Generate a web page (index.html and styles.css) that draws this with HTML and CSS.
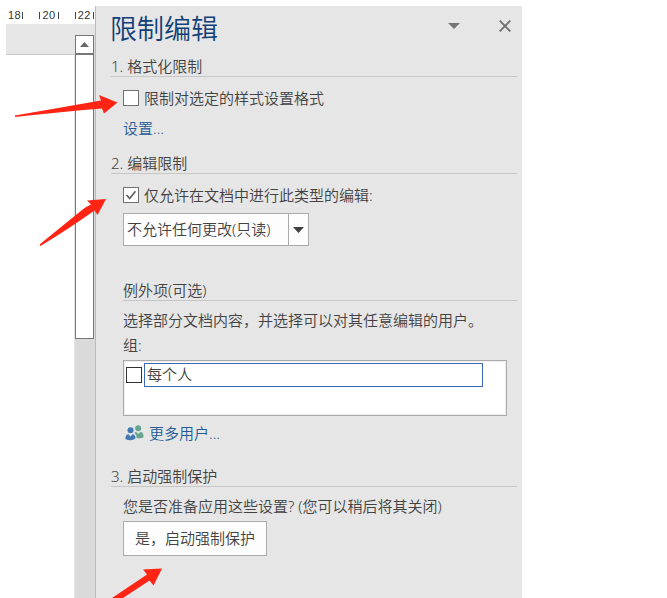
FILE: index.html
```html
<!DOCTYPE html>
<html lang="zh-CN">
<head>
<meta charset="utf-8">
<title>限制编辑</title>
<link rel="stylesheet" href="styles.css">
</head>
<body>
<div class="window">
  <div class="document">
    <div class="ruler"><span>18<i></i></span><span><i></i>20<i></i></span><span><i></i>22<i></i></span></div>
    <div class="workspace">
      <div class="page-column"><div class="page-gap"></div></div>
      <div class="scrollbar">
        <div class="scroll-up"><svg width="9" height="5" viewBox="0 0 9 5"><path d="M0 5L4.5 0L9 5Z" fill="#686868"/></svg></div>
        <div class="thumb"></div>
      </div>
    </div>
  </div>
  <aside class="panel">
    <header class="panel-header">
      <h1>限制编辑</h1>
      <svg class="menu-icon" width="12" height="6" viewBox="0 0 12 6"><path d="M0 0H12L6 6Z" fill="#757575"/></svg>
      <svg class="close-icon" width="12" height="12" viewBox="0 0 12 12"><path d="M.7 .7L11.3 11.3M11.3 .7L.7 11.3" stroke="#707070" stroke-width="1.9"/></svg>
    </header>
    <h2 class="format-title">1. 格式化限制</h2>
    <label class="option format-option"><span class="box"></span>限制对选定的样式设置格式</label>
    <a class="link settings">设置...</a>
    <h2 class="edit-title">2. 编辑限制</h2>
    <label class="option edit-option"><span class="box"><svg width="14" height="14" viewBox="0 0 14 14"><path d="M2.5 7L5.7 10.4L11.5 3.3" fill="none" stroke="#666" stroke-width="1.7"/></svg></span>仅允许在文档中进行此类型的编辑:</label>
    <div class="select"><span>不允许任何更改(只读)</span><b><svg width="11" height="6" viewBox="0 0 11 6"><path d="M0 0H11L5.5 6Z" fill="#404040"/></svg></b></div>
    <h2 class="exceptions">例外项(可选)</h2>
    <p class="hint">选择部分文档内容，并选择可以对其任意编辑的用户。</p>
    <p class="group-label">组:</p>
    <div class="group-list"><span class="box dark"></span><span class="entry">每个人</span></div>
    <a class="link more-users">
      <svg width="19" height="16" viewBox="0 0 19 16">
        <circle cx="13.2" cy="3.2" r="3" fill="#68a591"/>
        <path d="M9.5 7.6L11 6.8L13.3 9L15.6 6.8Q18.5 7.8 18.5 11V12.2Q16 13.7 11.5 12.9V11Z" fill="#68a591"/>
        <circle cx="5.5" cy="5.2" r="3" fill="#4479b4"/>
        <path d="M3.2 9L5.5 11.6L7.8 9Q10.7 10 10.5 13.5Q8.3 15.2 5.5 15.2Q2.5 15.2 .5 14V12.5Q.7 9.7 3.2 9Z" fill="#4479b4"/>
      </svg>更多用户...
    </a>
    <h2 class="protect-title">3. 启动强制保护</h2>
    <p class="question">您是否准备应用这些设置? (您可以稍后将其关闭)</p>
    <button>是，启动强制保护</button>
  </aside>
  <svg class="annotations" width="667" height="598" viewBox="0 0 667 598" fill="#ff2414">
    <path d="M15 115.5L101 100.5L99 95L117.5 102.5L104 113.5L102 108.5Q60 112 15 117Z"/>
    <path d="M39.5 244.5L82 210Q87 206 91 204.5L87 200.5L106 199L97.5 215L94.5 210.5Q70 228 40.5 246Z"/>
    <path d="M112 598L147 574.5L143 569.5L162 568.5L153.5 585.5L149.5 580.5L123 598Z"/>
  </svg>
</div>
</body>
</html>
```
FILE: styles.css
```css
* { box-sizing: border-box; }
body { margin: 0; background: #fff; color: #424242; font: 15px/20px "Noto Sans", "Noto Sans CJK SC", sans-serif; font-weight: 350; }
h1, h2, p { margin: 0; font-weight: inherit; }
.window { position: relative; display: flex; width: 667px; height: 598px; padding: 6px 0 0 6px; overflow: hidden; }
.document { display: flex; flex-direction: column; width: 89px; }
.ruler { display: flex; justify-content: space-between; height: 18px; padding: 0 1px 0 2px; font: 11px/18px "Liberation Sans", sans-serif; letter-spacing: .5px; color: #333; }
.ruler span { display: flex; align-items: center; gap: 2px; }
.ruler span:first-child { gap: 1px; }
.ruler i { width: 1px; height: 7px; background: #444; }
.workspace { display: flex; flex: 1; }
.page-column { width: 68px; }
.page-gap { height: 31px; background: #e6e6e6; border-bottom: 1px solid #c6c6c6; }
.scrollbar { width: 21px; padding: 11px 1px 0 0; background: #dadada; border-left: 1px solid #e6e6e6; box-shadow: inset 0 11px #e6e6e6; }
.scroll-up { display: flex; align-items: center; justify-content: center; width: 19px; height: 19px; background: #fff; border: 1px solid #777; }
.thumb { width: 19px; height: 285px; background: #fff; border: 1px solid #777; }
.panel { display: flex; flex-direction: column; align-items: flex-start; width: 427px; padding: 0 5px 0 27px; background: #e6e6e6; border-left: 1px solid #bbb; }
.panel-header { display: flex; width: 408px; height: 50px; margin-left: -13px; }
h1 { flex: 1; color: #123f78; font-size: 27px; line-height: 46px; }
.menu-icon { margin: 17px 39px 0 0; }
.close-icon { margin: 14px 7px 0 0; }
h2 { align-self: stretch; height: 21px; border-bottom: 1px solid #c6c6c6; font-size: 15px; }
.format-title, .edit-title, .protect-title { margin-left: -12px; }
.option { display: flex; align-items: center; gap: 5px; height: 20px; }
.box { display: flex; width: 16px; height: 16px; background: #fff; border: 1px solid #707070; }
.format-option { margin-top: 11px; }
.link { color: #245a96; }
.settings { margin-top: 10px; }
.edit-title { margin-top: 15px; }
.edit-option { margin-top: 11px; }
.select { display: flex; width: 186px; height: 33px; margin-top: 8px; background: #fdfdfd; border: 1px solid #ababab; line-height: 31px; }
.select span { width: 165px; padding-left: 3px; border-right: 1px solid #ababab; white-space: nowrap; }
.select b { display: flex; flex: 1; align-items: center; justify-content: center; }
.exceptions { margin-top: 34px; }
.hint { margin-top: 9px; white-space: nowrap; }
.group-label { margin-top: 5px; }
.group-list { display: flex; gap: 2px; width: 384px; height: 56px; margin-top: 5px; padding: 2px 0 0 2px; background: #fff; border: 1px solid #ababab; box-shadow: inset 0 0 0 1px #eee; }
.dark { margin-top: 4px; border-color: #333; }
.entry { width: 339px; height: 24px; padding-left: 2px; border: 1px solid #3b68b5; line-height: 20px; }
.more-users { display: flex; align-items: center; gap: 5px; margin: 7px 0 0 2px; }
.protect-title { margin-top: 23px; }
.question { margin-top: 9px; }
button { width: 144px; height: 35px; margin-top: 5px; padding: 0 0 2px; color: #424242; background: #fdfdfd; border: 1px solid #ababab; font: inherit; }
.annotations { position: absolute; inset: 0; }
```
